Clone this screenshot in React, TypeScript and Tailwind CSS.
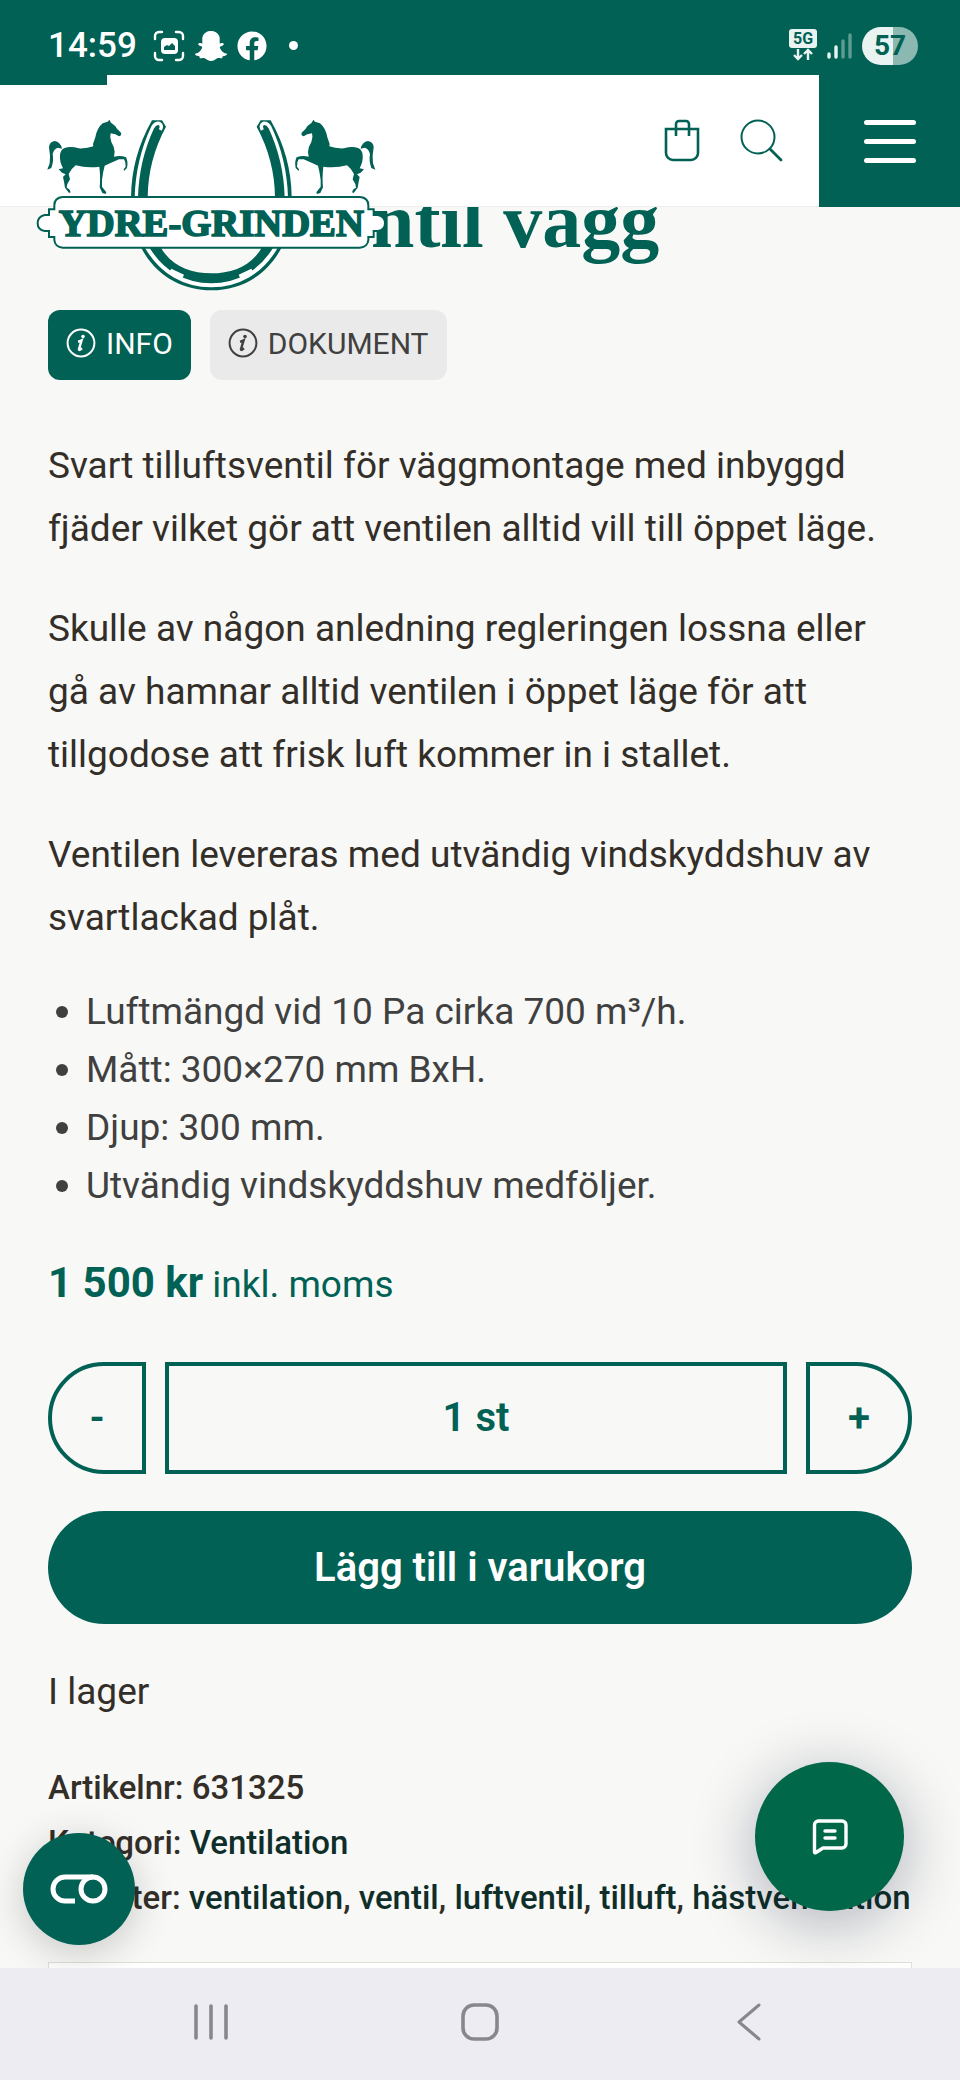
import { useState } from "react";
import { FaFacebook, FaSnapchatGhost } from "react-icons/fa";

const DESCRIPTION = [
  "Svart tilluftsventil för väggmontage med inbyggd fjäder vilket gör att ventilen alltid vill till öppet läge.",
  "Skulle av någon anledning regleringen lossna eller gå av hamnar alltid ventilen i öppet läge för att tillgodose att frisk luft kommer in i stallet.",
  "Ventilen levereras med utvändig vindskyddshuv av svartlackad plåt.",
];

const SPECS = [
  "Luftmängd vid 10 Pa cirka 700 m³/h.",
  "Mått: 300×270 mm BxH.",
  "Djup: 300 mm.",
  "Utvändig vindskyddshuv medföljer.",
];

const TAGS = ["ventilation", "ventil", "luftventil", "tilluft", "hästventilation"];

export default function App() {
  return (
    <div className="relative min-h-screen overflow-x-hidden bg-[#f8f8f6] font-['Roboto',sans-serif] text-[#332e28]">
      <StatusBar />
      <SiteHeader />
      <ProductPage />
      <FloatingButtons />
      <SystemNav />
    </div>
  );
}

function StatusBar() {
  return (
    <div className="flex h-[75px] items-center justify-between bg-[#006154] pt-4 pr-[42px] pl-12 text-white">
      <div className="flex items-center">
        <span className="text-[35px] leading-none font-medium">14:59</span>
        <svg viewBox="0 0 32 32" className="ml-4 h-8 w-8" fill="none" stroke="currentColor">
          <path
            d="M2 9V6a4 4 0 0 1 4-4h3M23 2h3a4 4 0 0 1 4 4v3M30 23v3a4 4 0 0 1-4 4h-3M9 30H6a4 4 0 0 1-4-4v-3"
            strokeWidth="2.4"
            strokeLinecap="round"
          />
          <rect x="8" y="8" width="17" height="16" rx="4" fill="currentColor" stroke="none" />
          <path d="M11 20v-3l3-2 2 1 3-3 3 3v4z" fill="#006154" stroke="none" />
        </svg>
        <FaSnapchatGhost className="ml-[10px] h-8 w-8" />
        <FaFacebook className="ml-[10px] h-[30px] w-[30px]" />
        <span className="ml-[22px] h-[9px] w-[9px] rounded-full bg-white" />
      </div>
      <div className="flex items-center gap-[10px]">
        <svg viewBox="0 0 28 34" className="h-[34px] w-7">
          <rect width="28" height="19" rx="3" fill="#e9f3f1" />
          <text
            x="14"
            y="15"
            textAnchor="middle"
            fontSize="16"
            fontWeight="700"
            fill="#006154"
            className="font-['Roboto',sans-serif]"
          >
            5G
          </text>
          <path
            d="M9 20v10M5 26l4 4 4-4M19 31V21M15 25l4-4 4 4"
            fill="none"
            stroke="#e9f3f1"
            strokeWidth="2.4"
          />
        </svg>
        <svg viewBox="0 0 25 27" className="h-[27px] w-[25px]" stroke="#e9f3f1" strokeWidth="3.4" strokeLinecap="round">
          <path d="M2 22v3M9 15v10" />
          <path d="M16 9v16M23 3v22" opacity="0.4" />
        </svg>
        <div className="flex h-[38px] w-14 items-center justify-center rounded-full bg-linear-to-r from-[#e9f3f1] from-55% to-[#8bb8b1] to-55% text-[28px] font-bold text-[#006154]">
          57
        </div>
      </div>
    </div>
  );
}

function SiteHeader() {
  return (
    <header className="relative z-10 flex h-[132px] justify-end border-b border-[#eeeeec] bg-white">
      <div className="absolute top-0 left-0 h-[10px] w-[107px] bg-[#006154]" />
      <a href="#" aria-label="Ydre-Grinden" className="absolute top-[43px] left-9">
        <Logo />
      </a>
      <div className="flex items-center gap-10 pr-9">
        <button type="button" aria-label="Varukorg">
          <svg viewBox="0 0 36 43" className="h-[43px] w-9 text-[#006154]" fill="none" stroke="currentColor" strokeWidth="2.6">
            <path d="M2 10h32v24a7 7 0 0 1-7 7H9a7 7 0 0 1-7-7z" />
            <path d="M12 17V5a3 3 0 0 1 3-3h7a3 3 0 0 1 3 3v12" />
          </svg>
        </button>
        <button type="button" aria-label="Sök">
          <svg viewBox="0 0 43 43" className="h-[43px] w-[43px] text-[#006154]" fill="none" stroke="currentColor" strokeLinecap="round">
            <circle cx="18" cy="18" r="16.5" strokeWidth="2" />
            <path d="M30 30l11 11" strokeWidth="2.8" />
          </svg>
        </button>
      </div>
      <button
        type="button"
        aria-label="Meny"
        className="-mb-px flex w-[141px] flex-col items-end justify-center gap-[14px] bg-[#006154] pr-11"
      >
        <span className="h-[5px] w-[52px] rounded-full bg-white" />
        <span className="h-[5px] w-[52px] rounded-full bg-white" />
        <span className="h-[5px] w-[52px] rounded-full bg-white" />
      </button>
    </header>
  );
}

function Horse() {
  return (
    <g fill="#006154">
      <path d="M328 359 L333 368 Q346 376 351 386 L363 398 Q366 406 357 409 Q348 402 332 400 Q328 412 334 426 Q344 442 344 456 L342 470 Q362 465 378 472 Q385 484 381 504 L372 513 L371 508 L377 500 Q378 486 372 478 L357 478 Q344 484 330 490 L314 497 Q309 514 306 540 L306 560 L319 577 L317 582 L307 579 L299 562 Q302 536 298 500 Q262 505 227 496 Q212 508 206 522 L210 538 L202 552 L200 563 L208 568 L212 577 L207 579 L195 563 L192 545 L189 531 L197 523 L186 518 L176 508 L189 505 Q178 484 180 466 Q181 449 194 444 Q212 438 236 445 Q262 446 280 439 L279 432 L286 412 Q291 384 308 370 L323 365 Z" />
      <path d="M186 446 Q182 426 164 423 Q148 425 147 442 Q152 468 149 490 L142 509 L154 504 Q162 482 158 462 Q162 446 174 443 Z" />
    </g>
  );
}

function HorseshoeArm() {
  return (
    <g>
      <path d="M456 361 H486 L498 380 Q444 480 443 592 H393 Q394 470 456 361 Z" fill="#006154" />
      <path
        d="M409 592 Q412 480 458 382 Q466 368 478 370 Q488 376 481 390"
        fill="none"
        stroke="#fff"
        strokeWidth="10"
      />
    </g>
  );
}

function Logo() {
  return (
    <svg viewBox="108 354 1053 522" className="h-[174px] w-[351px]">
      <Horse />
      <HorseshoeArm />
      <g transform="translate(1268 0) scale(-1 1)">
        <Horse />
        <HorseshoeArm />
      </g>
      <path
        d="M422 740 C466 828 548 871 634 871 C720 871 802 828 846 740 H787 C756 796 700 820 634 820 C568 820 512 796 481 740 Z"
        fill="#006154"
      />
      <path d="M440 740 C484 818 556 856 634 856 C712 856 784 818 828 740" fill="none" stroke="#fff" strokeWidth="12" />
      <path d="M514 806 L552 824 L546 838 L506 820 Z M754 806 L716 824 L722 838 L762 820 Z" fill="#fff" />
      <path
        d="M188 591 H1080 Q1105 593 1105 616 V628 H1121 V645 H1134 Q1155 650 1155 670 Q1155 690 1134 693 H1121 V711 H1105 V720 Q1103 741 1080 743 H188 Q165 741 163 720 V711 H147 V693 H134 Q113 690 113 670 Q113 650 134 645 H147 V628 H163 V616 Q163 593 188 591 Z"
        fill="#fff"
        stroke="#006154"
        strokeWidth="6"
      />
      <text
        x="634"
        y="709"
        textAnchor="middle"
        fontSize="116"
        fontWeight="700"
        fill="#006154"
        stroke="#006154"
        strokeWidth="5"
        className="font-['Liberation_Serif',serif]"
      >
        YDRE-GRINDEN
      </text>
    </svg>
  );
}

function InfoIcon() {
  return (
    <svg viewBox="0 0 30 30" className="h-[30px] w-[30px]" fill="none" stroke="currentColor">
      <circle cx="15" cy="15" r="13.4" strokeWidth="2" />
      <circle cx="17" cy="8.5" r="1.8" fill="currentColor" stroke="none" />
      <path d="M12 13.6q2-.3 3.6-1.2l-2.6 8.600q-.2 1.400 1 .8l2-1.600" strokeWidth="2.4" />
    </svg>
  );
}

function ProductPage() {
  const [tab, setTab] = useState("info");
  const [quantity, setQuantity] = useState(1);

  const tabClass = (name: string) =>
    tab === name ? "bg-[#006154] text-white" : "bg-[#eaeaea] text-[#404040]";

  return (
    <main className="px-12">
      <h1 className="-mt-[26px] pl-[323px] font-['Liberation_Serif',serif] text-[78px] leading-[80px] font-bold text-[#006154]">
        ntil vägg
      </h1>

      <div className="mt-[49px] flex gap-[19px]">
        <button
          type="button"
          onClick={() => setTab("info")}
          className={`flex h-[70px] items-center gap-[10px] rounded-xl px-[18px] pb-1 text-[30px] ${tabClass("info")}`}
        >
          <InfoIcon /> INFO
        </button>
        <button
          type="button"
          onClick={() => setTab("dokument")}
          className={`flex h-[70px] items-center gap-[10px] rounded-xl px-[18px] pb-1 text-[30px] ${tabClass("dokument")}`}
        >
          <InfoIcon /> DOKUMENT
        </button>
      </div>

      <div className="mt-[54px] space-y-[37px] text-[37px] leading-[63px]">
        {DESCRIPTION.map((text) => (
          <p key={text}>{text}</p>
        ))}
      </div>

      <ul className="mt-[34px] text-[37px] leading-[58px] text-[#404040]">
        {SPECS.map((spec) => (
          <li key={spec} className="flex items-center">
            <span className="mr-[18px] ml-2 h-3 w-3 rounded-full bg-[#404040]" />
            {spec}
          </li>
        ))}
      </ul>

      <p className="mt-[37px] text-[37px] leading-[62px] text-[#006154]">
        <strong className="text-[42px] font-bold">1 500 kr</strong> inkl. moms
      </p>

      <div className="mt-[46px] flex h-28 gap-[19px] text-[40px] font-semibold text-[#006154]">
        <button
          type="button"
          aria-label="Minska antal"
          onClick={() => setQuantity(Math.max(1, quantity - 1))}
          className="w-[98px] rounded-l-full border-4 border-[#006154]"
        >
          -
        </button>
        <input
          aria-label="Antal"
          value={`${quantity} st`}
          onChange={(e) => setQuantity(parseInt(e.target.value) || 1)}
          className="min-w-0 flex-1 border-4 border-[#006154] text-center outline-none"
        />
        <button
          type="button"
          aria-label="Öka antal"
          onClick={() => setQuantity(quantity + 1)}
          className="w-[106px] rounded-r-full border-4 border-[#006154]"
        >
          +
        </button>
      </div>

      <button
        type="button"
        className="mt-[37px] h-[113px] w-full rounded-full bg-[#006154] text-[40px] font-semibold text-white"
      >
        Lägg till i varukorg
      </button>

      <p className="mt-9 text-[37px] leading-[63px]">I lager</p>

      <div className="mt-[37px] text-[33px] leading-[55px] font-medium">
        <p>Artikelnr: 631325</p>
        <p>
          Kategori:{" "}
          <a href="#" className="text-[#0f2e29]">
            Ventilation
          </a>
        </p>
        <p>
          Etiketter:{" "}
          {TAGS.map((tag, i) => (
            <span key={tag}>
              {i > 0 && ", "}
              <a href="#" className="text-[#0f2e29]">
                {tag}
              </a>
            </span>
          ))}
        </p>
      </div>

      <div className="mt-[37px] h-[100px] border border-[#dededa] bg-white" />
    </main>
  );
}

function FloatingButtons() {
  return (
    <>
      <button
        type="button"
        aria-label="Cookie-inställningar"
        className="fixed bottom-[135px] left-[23px] z-20 grid h-28 w-28 place-items-center rounded-full bg-[#006154] shadow-[0_8px_40px_rgba(0,0,0,0.2)]"
      >
        <svg viewBox="0 0 58 30" className="h-[30px] w-[58px]" fill="none" stroke="#fff" strokeWidth="5">
          <path d="M25 27H15A12 12 0 0 1 15 3H43" />
          <circle cx="43" cy="15" r="12" />
        </svg>
      </button>
      <button
        type="button"
        aria-label="Chatt"
        className="fixed right-14 bottom-[169px] z-20 grid h-[149px] w-[149px] place-items-center rounded-full bg-[#006848] shadow-[0_12px_64px_rgba(10,20,50,0.32)]"
      >
        <svg
          viewBox="0 0 36 36"
          className="h-9 w-9"
          fill="none"
          stroke="#fff"
          strokeWidth="3.4"
          strokeLinecap="round"
          strokeLinejoin="round"
        >
          <path d="M2.500 33V6a4 4 0 0 1 4-4H30a4 4 0 0 1 4 4v19a4 4 0 0 1-4 4H11l-7 4.500q-1.500.8-1.500-.5z" />
          <path d="M13 12h10M13 19h10" />
        </svg>
      </button>
    </>
  );
}

function SystemNav() {
  return (
    <nav className="fixed inset-x-0 bottom-0 z-20 grid h-28 grid-cols-3 place-items-center bg-[#edecf2] px-[76px] pb-1 text-[#88878c]">
      <button type="button" aria-label="Senaste appar">
        <svg viewBox="0 0 36 38" className="h-[38px] w-9" stroke="currentColor" strokeWidth="3.6" strokeLinecap="round">
          <path d="M3 3v32M18 3v32M33 3v32" />
        </svg>
      </button>
      <button type="button" aria-label="Hem">
        <svg viewBox="0 0 38 38" className="h-[38px] w-[38px]" fill="none" stroke="currentColor" strokeWidth="3.6">
          <rect x="2" y="2" width="34" height="34" rx="11" />
        </svg>
      </button>
      <button type="button" aria-label="Tillbaka">
        <svg viewBox="0 0 26 38" className="h-[38px] w-[26px]" fill="none" stroke="currentColor" strokeWidth="3" strokeLinecap="round" strokeLinejoin="round">
          <path d="M23 2L3 19l20 17" />
        </svg>
      </button>
    </nav>
  );
}
